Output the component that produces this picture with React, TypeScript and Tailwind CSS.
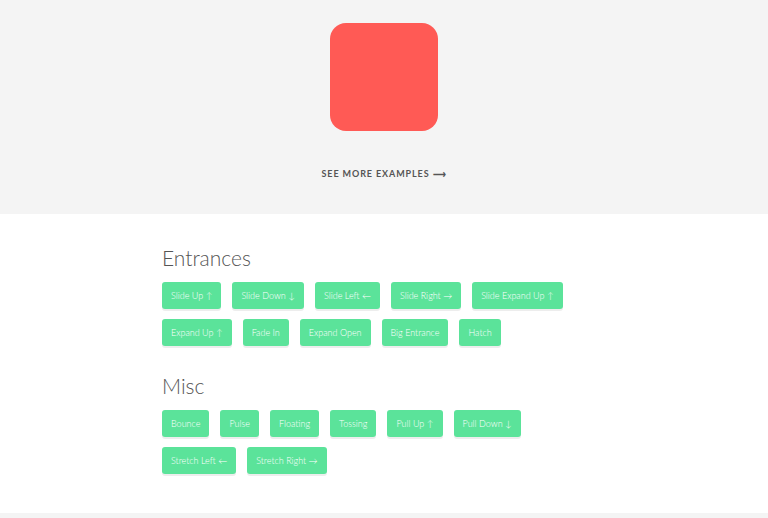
const ENTRANCES = [
  ["Slide Up ↑", "Slide Down ↓", "Slide Left ←", "Slide Right →", "Slide Expand Up ↑"],
  ["Expand Up ↑", "Fade In", "Expand Open", "Big Entrance", "Hatch"],
];

const MISC = [
  ["Bounce", "Pulse", "Floating", "Tossing", "Pull Up ↑", "Pull Down ↓"],
  ["Stretch Left ←", "Stretch Right →"],
];

function Group({ title, rows }: { title: string; rows: string[][] }) {
  return (
    <div>
      <h2 className="text-[21px] font-light leading-[28px] text-[#555]">{title}</h2>
      <div className="mt-[10px] flex flex-col gap-[10px]">
        {rows.map((row, i) => (
          <div key={i} className="flex gap-[11px]">
            {row.map((item) => (
              <button
                key={item}
                className="h-[27px] rounded-[3px] bg-[#5be39a] px-[9px] text-[9px] font-light text-white shadow-[0_2px_0_rgba(0,0,0,0.07)]"
              >
                {item}
              </button>
            ))}
          </div>
        ))}
      </div>
    </div>
  );
}

export default function App() {
  return (
    <div className="flex h-[518px] flex-col bg-white font-['Lato',sans-serif]">
      {/* Demo area */}
      <section className="flex h-[214px] flex-col items-center bg-[#f4f4f4] pt-[23px]">
        <div className="h-[108px] w-[108px] rounded-[16px] bg-[#ff5a55]" />
        <a href="#" className="mt-[36px] text-[9px] font-bold tracking-[0.1em] text-[#555]">
          SEE MORE EXAMPLES ⟶
        </a>
      </section>

      {/* Animation list */}
      <section className="flex-1">
        <div className="ml-[162px] pt-[30px]">
          <Group title="Entrances" rows={ENTRANCES} />
          <div className="mt-[26px]">
            <Group title="Misc" rows={MISC} />
          </div>
        </div>
      </section>

      <div className="h-[5px] bg-[#f4f4f4]" />
    </div>
  );
}
